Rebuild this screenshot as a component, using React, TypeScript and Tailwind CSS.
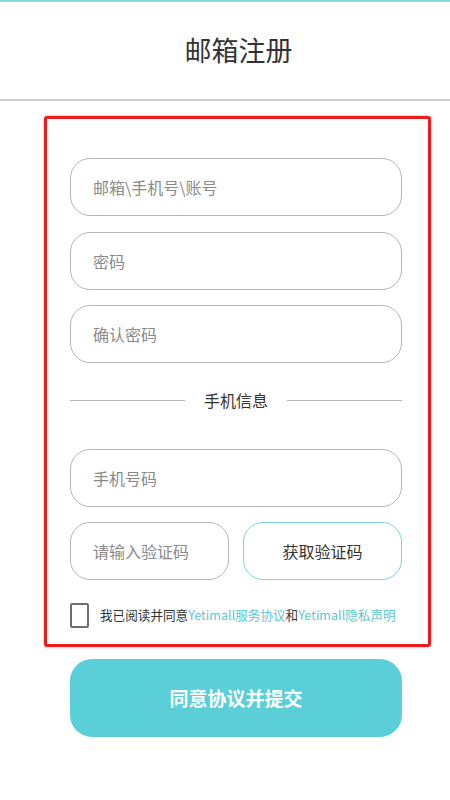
import React from "react";

const font = { fontFamily: '"Noto Sans CJK SC", "Noto Sans", sans-serif' };

function Field({ placeholder }: { placeholder: string }) {
  return (
    <input
      placeholder={placeholder}
      className="w-full h-[58px] rounded-[20px] border border-[#b5b5b5] bg-white pl-[22px] pr-4 text-[16px] text-[#333] outline-none placeholder:text-[#8a8a8a]"
    />
  );
}

export default function App() {
  return (
    <div className="w-[450px] h-[800px] bg-white overflow-hidden" style={font}>
      <div className="h-[2px] bg-[#86dcd3]" />
      <header className="h-[99px] flex items-center justify-center pl-[27px] border-b-2 border-[#cfcfcf]">
        <h1 className="text-[27px] text-[#333] font-normal">邮箱注册</h1>
      </header>
      <div className="ml-[44px] w-[387px] mt-[15px] border-[3px] border-[#ee1c1c] rounded-[3px] pl-[23px] pr-[26px] pt-[39px] pb-[16px] shadow-[0_0_2px_rgba(238,28,28,0.6)]">
        <div className="flex flex-col gap-[15.5px]">
          <Field placeholder="邮箱\手机号\账号" />
          <Field placeholder="密码" />
          <Field placeholder="确认密码" />
        </div>
        <div className="mt-[25px] h-[24px] flex items-center">
          <div className="flex-1 h-px bg-[#b5b5b5]" />
          <span className="px-[19px] text-[16px] text-[#333]">手机信息</span>
          <div className="flex-1 h-px bg-[#b5b5b5]" />
        </div>
        <div className="mt-[37px]">
          <Field placeholder="手机号码" />
        </div>
        <div className="mt-[15px] flex gap-[14px]">
          <input
            placeholder="请输入验证码"
            className="w-[159px] h-[58px] rounded-[20px] border border-[#b5b5b5] bg-white pl-[22px] text-[16px] outline-none placeholder:text-[#8a8a8a]"
          />
          <button className="flex-1 h-[58px] rounded-[20px] border border-[#7fd3dc] bg-white text-[16px] text-[#333]">
            获取验证码
          </button>
        </div>
        <div className="mt-[23px] flex items-center h-[25px]">
          <div className="shrink-0 w-[19px] h-[25px] border-2 border-[#6e6e6e] rounded-[2px] bg-white" />
          <p className="ml-[11px] text-[12.6px] text-[#333] whitespace-nowrap">
            我已阅读并同意<span className="text-[#5cc7d2]">Yetimall服务协议</span>和
            <span className="text-[#5cc7d2]">Yetimall隐私声明</span>
          </p>
        </div>
      </div>
      <div className="pl-[70px] w-[402px] mt-[12px]">
        <button className="w-full h-[78px] rounded-[22px] bg-[#5acfd8] text-white text-[19px] font-bold">
          同意协议并提交
        </button>
      </div>
    </div>
  );
}
